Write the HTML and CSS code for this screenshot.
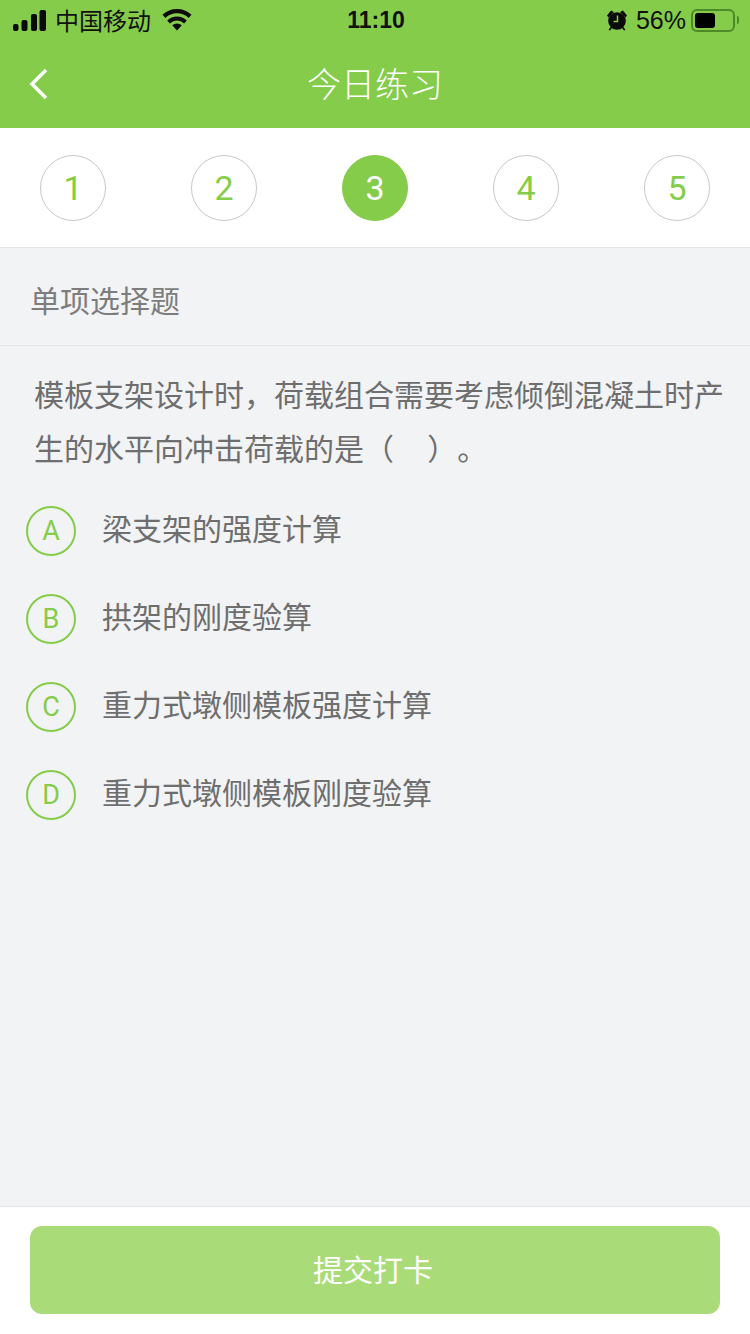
FILE: index.html
```html
<!doctype html>
<html lang="zh">

<head>
    <meta charset="utf-8">
    <title>今日练习</title>
    <link rel="stylesheet" href="styles.css">
</head>

<body>
    <div class="page">
        <div class="top">
            <div class="status">
                <div class="status-left">
                    <svg class="signal" width="33" height="21" viewBox="0 0 33 21">
                        <rect x="0" y="14" width="5.500" height="7" rx="2" />
                        <rect x="8.500" y="10" width="6" height="11" rx="2" />
                        <rect x="18" y="4" width="6" height="17" rx="2" />
                        <rect x="26.500" y="0" width="6.500" height="21" rx="2" />
                    </svg>
                    <span class="carrier">中国移动</span>
                    <svg class="wifi" width="30" height="22" viewBox="0 0 30 22">
                        <path d="M15 21.500l-4.800-5.200a7 7 0 0 1 9.600 0z" />
                        <path d="M15 7.500a14 14 0 0 0-9.800 4l2.700 2.900a10 10 0 0 1 14.200 0l2.700-2.900a14 14 0 0 0-9.800-4z" />
                        <path d="M15 0A21 21 0 0 0 .5 5.800l2.900 3.100a17 17 0 0 1 23.200 0l2.900-3.100A21 21 0 0 0 15 0z" />
                    </svg>
                </div>
                <div class="time">11:10</div>
                <div class="status-right">
                    <svg class="alarm" width="22" height="22" viewBox="0 0 22 22">
                        <circle cx="11" cy="12" r="8.800" />
                        <path d="M1 6.500l4-5 3 1.500-5.500 5.500zM21 6.500l-4-5-3 1.500 5.500 5.500zM4.500 18l-2 3 1.500.500 2-2.500zM17.500 18l2 3-1.500.500-2-2.500z" />
                        <path class="alarm-hand" d="M11.500 6.500v6h-4" />
                    </svg>
                    <span class="percent">56%</span>
                    <div class="battery"><div class="battery-level"></div></div>
                    <div class="battery-tip"></div>
                </div>
            </div>
            <div class="nav">
                <svg class="back" width="20" height="32" viewBox="0 0 20 32">
                    <path d="M17 2L3 16l14 14" />
                </svg>
                <h1 class="nav-title">今日练习</h1>
            </div>
        </div>

        <div class="steps">
            <div class="step">1</div>
            <div class="step">2</div>
            <div class="step step-active">3</div>
            <div class="step">4</div>
            <div class="step">5</div>
        </div>

        <div class="content">
            <div class="type">单项选择题</div>
            <div class="question">模板支架设计时，荷载组合需要考虑倾倒混凝土时产生的水平向冲击荷载的是（&nbsp;&nbsp;&nbsp;&nbsp;）。</div>
            <div class="options">
                <div class="option"><span class="letter">A</span><span class="option-text">梁支架的强度计算</span></div>
                <div class="option"><span class="letter">B</span><span class="option-text">拱架的刚度验算</span></div>
                <div class="option"><span class="letter">C</span><span class="option-text">重力式墩侧模板强度计算</span></div>
                <div class="option"><span class="letter">D</span><span class="option-text">重力式墩侧模板刚度验算</span></div>
            </div>
        </div>

        <div class="footer">
            <button class="submit">提交打卡</button>
        </div>
    </div>
</body>

</html>
```

FILE: styles.css
```css
* {
    box-sizing: border-box;
}

html,
body {
    margin: 0;
    padding: 0;
}

body {
    font-family: "Liberation Sans", "Noto Sans CJK SC", sans-serif;
}

.page {
    display: flex;
    flex-direction: column;
    width: 750px;
    height: 1334px;
    overflow: hidden;
    background-color: #f2f3f5;
}

/* top bar */
.top {
    height: 128px;
    background-color: #85cc4a;
}

.status {
    display: grid;
    grid-template-columns: 1fr auto 1fr;
    align-items: center;
    height: 40px;
    padding: 0 11px 0 13px;
    color: #111;
}

.status-left,
.status-right {
    display: flex;
    align-items: center;
}

.status-right {
    justify-content: flex-end;
}

.signal,
.wifi,
.alarm {
    fill: #0b0b0b;
}

.carrier {
    margin-left: 9px;
    margin-bottom: 2px;
    font-size: 24px;
}

.wifi {
    margin-left: 11px;
}

.time {
    font-size: 23px;
    font-weight: bold;
}

.alarm-hand {
    fill: none;
    stroke: #85cc4a;
    stroke-width: 1.500;
}

.percent {
    margin-left: 8px;
    font-size: 25px;
}

.battery {
    width: 44px;
    height: 23px;
    margin-left: 5px;
    padding: 2px;
    border: 2px solid #4f8a2a;
    border-radius: 6px;
}

.battery-level {
    width: 20px;
    height: 15px;
    border-radius: 3px;
    background-color: #000;
}

.battery-tip {
    width: 2px;
    height: 8px;
    margin-left: 2px;
    border-radius: 0 2px 2px 0;
    background-color: #4f8a2a;
}

.nav {
    position: relative;
    height: 88px;
    padding-top: 5px;
}

.back {
    position: absolute;
    left: 29px;
    top: 28px;
    fill: none;
    stroke: #fff;
    stroke-width: 3.500;
}

.nav-title {
    margin: 0;
    font-size: 34px;
    font-weight: 300;
    line-height: 80px;
    text-align: center;
    color: #fff;
}

/* question numbers */
.steps {
    display: flex;
    justify-content: space-between;
    align-items: center;
    height: 120px;
    padding: 0 40px;
    background-color: #fff;
    border-bottom: 1px solid #e6e6e6;
}

.step {
    width: 66px;
    height: 66px;
    font-family: Roboto, sans-serif;
    font-size: 34px;
    font-weight: 400;
    line-height: 65px;
    text-align: center;
    color: #85cc4a;
    border: 1px solid #c8c8c8;
    border-radius: 50%;
}

.step-active {
    color: #fff;
    background-color: #85cc4a;
    border-color: #85cc4a;
}

/* question */
.content {
    flex: 1;
}

.type {
    height: 98px;
    padding-left: 30px;
    font-size: 30px;
    line-height: 108px;
    color: #7d7d7d;
    border-bottom: 1px solid #e6e6e6;
}

.question {
    padding: 23px 20px 0 34px;
    font-size: 30px;
    line-height: 54px;
    color: #6e6e6e;
    text-spacing-trim: space-all;
}

.options {
    padding: 10px 0 0 26px;
}

.option {
    display: flex;
    align-items: center;
    gap: 26px;
    height: 88px;
    font-size: 30px;
    color: #6e6e6e;
}

.option-text {
    margin-bottom: 8px;
}

.letter {
    width: 50px;
    height: 50px;
    font-family: Roboto, sans-serif;
    font-size: 27px;
    font-weight: 400;
    line-height: 46px;
    text-align: center;
    color: #85cc4a;
    border: 2px solid #85cc4a;
    border-radius: 50%;
}

/* submit */
.footer {
    height: 128px;
    padding: 19px 30px 0;
    background-color: #fff;
    border-top: 1px solid #e6e6e6;
}

.submit {
    display: block;
    width: 100%;
    height: 88px;
    padding: 0 4px 4px 0;
    font-family: inherit;
    font-size: 30px;
    color: #fff;
    background-color: #a9dc78;
    border: 0;
    border-radius: 12px;
}
```
